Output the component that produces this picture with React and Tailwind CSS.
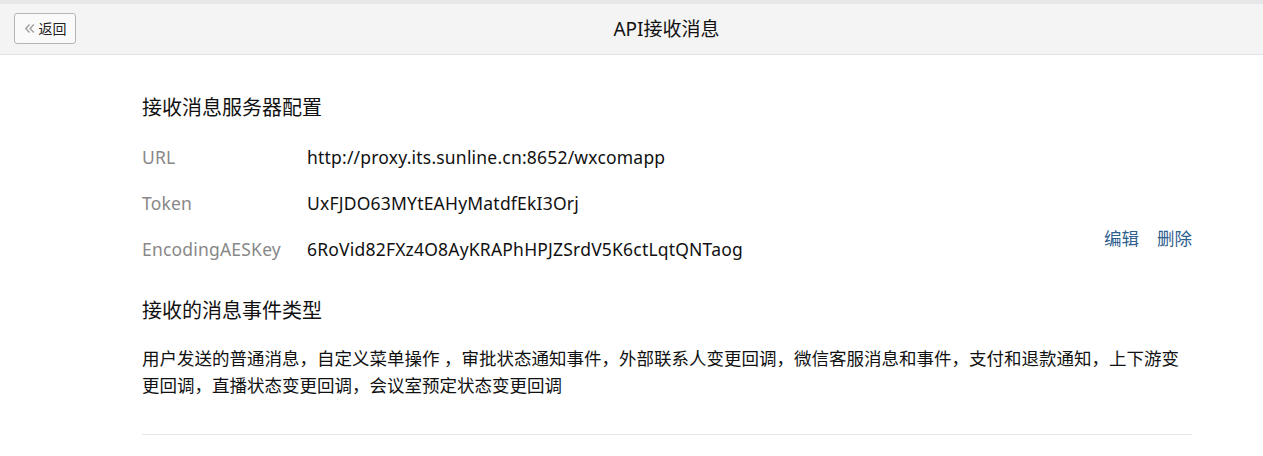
import React from 'react';

const font = { fontFamily: '"Noto Sans", "Noto Sans CJK SC", sans-serif' };

const rows = [
  { label: 'URL', value: 'http://proxy.its.sunline.cn:8652/wxcomapp' },
  { label: 'Token', value: 'UxFJDO63MYtEAHyMatdfEkI3Orj' },
  { label: 'EncodingAESKey', value: '6RoVid82FXz4O8AyKRAPhHPJZSrdV5K6ctLqtQNTaog' },
];

function DoubleChevron() {
  return (
    <svg width="11" height="11" viewBox="0 0 11 11" fill="none" stroke="#a0a0a0" strokeWidth="1.4">
      <path d="M5.5 1.5 L1.8 5.5 L5.5 9.5" />
      <path d="M9.8 1.5 L6.1 5.5 L9.8 9.5" />
    </svg>
  );
}

export default function App() {
  return (
    <div className="w-full min-h-screen bg-white text-[#222]" style={font}>

      {/* Header */}
      <div className="border-t-4 border-[#e6e7e9] bg-[#f4f4f4] border-b border-b-[#e1e4e8]">
        <div className="relative h-[50px] flex items-center justify-center pl-[70px]">
          <button className="absolute left-[14px] top-[9px] h-[31px] w-[62px] flex items-center justify-center gap-[4px] border border-[#b5b5b5] rounded-[3px] bg-[#fafafa] text-[14px] text-[#222]">
            <DoubleChevron />
            <span>返回</span>
          </button>
          <h1 className="text-[19px] leading-none text-[#111]">API接收消息</h1>
        </div>
      </div>

      {/* Content */}
      <div className="pl-[142px] pr-[71px] pt-[39px]">
        <h2 className="text-[20px] leading-[28px] text-[#111]">接收消息服务器配置</h2>

        <div className="mt-[12px] flex items-end justify-between">
          <div>
            {rows.map((r) => (
              <div key={r.label} className="h-[46px] flex items-center text-[17.5px] tracking-[0.2px]">
                <span className="w-[165px] text-[#888]">{r.label}</span>
                <span className="text-[#111]">{r.value}</span>
              </div>
            ))}
          </div>
          <div className="mb-[20px] flex gap-[18px] text-[17.5px] leading-[28px] text-[#2f5f8f]">
            <a href="#">编辑</a>
            <a href="#">删除</a>
          </div>
        </div>

        <h2 className="mt-[25px] text-[20px] leading-[28px] text-[#111]">接收的消息事件类型</h2>
        <p className="mt-[20px] text-[17.5px] leading-[27px] text-[#111]">
          用户发送的普通消息，自定义菜单操作 ，审批状态通知事件，外部联系人变更回调，微信客服消息和事件，支付和退款通知，上下游变更回调，直播状态变更回调，会议室预定状态变更回调
        </p>

        <div className="mt-[35px] border-t border-[#e8e8e8]" />
      </div>
    </div>
  );
}
